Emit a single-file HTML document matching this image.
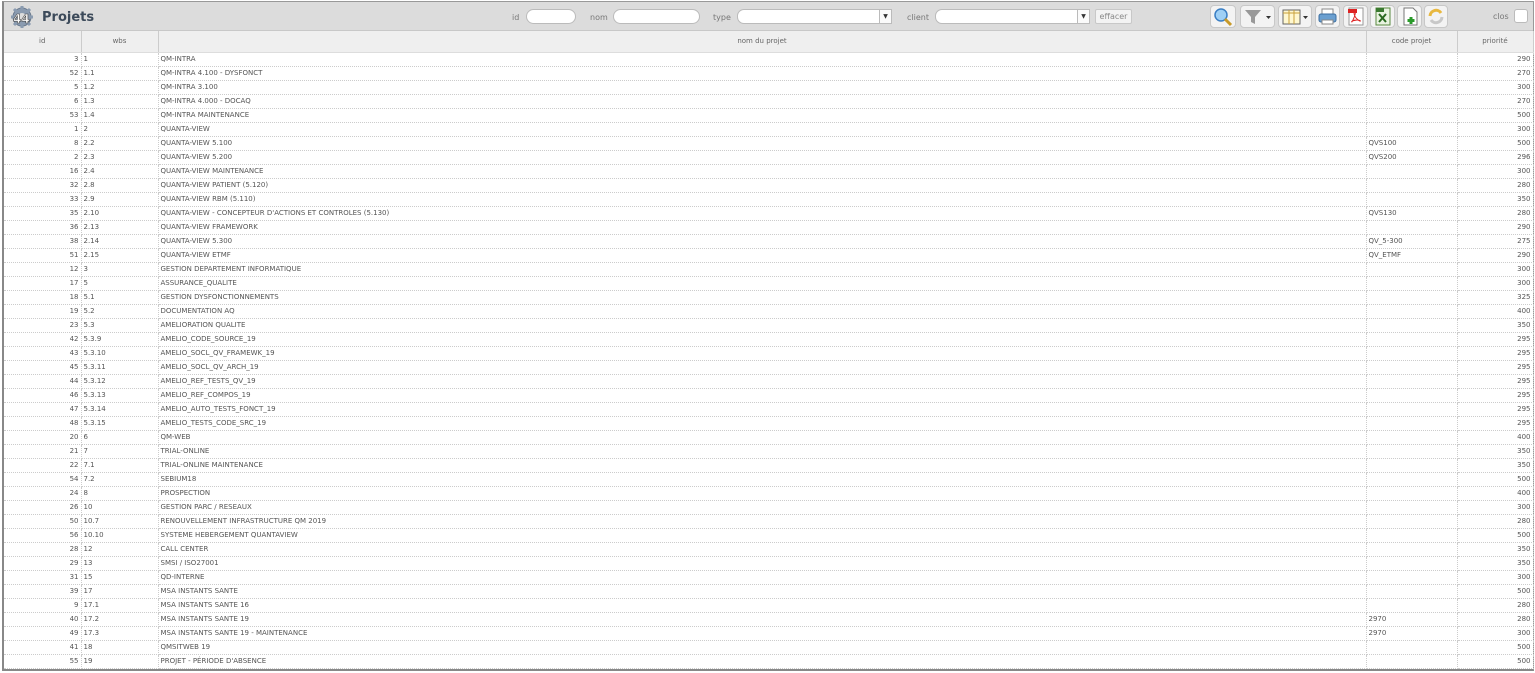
<!DOCTYPE html>
<html><head><meta charset="utf-8"><style>
*{box-sizing:border-box;margin:0;padding:0}
body{width:1535px;height:673px;background:#fff;font-family:"DejaVu Sans","Liberation Sans",sans-serif;font-size:7px;color:#555;position:relative;overflow:hidden}
.frame{position:absolute;left:2px;top:1px;width:1532px;height:670px;border:1px solid #999;border-left:2px solid #888;border-bottom:2px solid #888}
.bar{position:absolute;left:0;top:0;width:100%;height:29px;background:#dcdcdc;border-bottom:1px solid #c8c8c8}
.title{position:absolute;left:38px;top:8px;font-size:13px;font-weight:bold;color:#3c4a5a;font-family:"DejaVu Sans",sans-serif}
.lbl{position:absolute;top:11px;font-size:8px;color:#777}
.inp{position:absolute;top:7px;height:15px;background:#fff;border:1px solid #bbb;border-radius:8px}
.sel{position:absolute;top:7px;height:15px;background:#fff;border:1px solid #bbb;border-radius:7px 0 0 7px}
.dd{position:absolute;top:7px;width:13px;height:15px;background:#fafafa;border:1px solid #bbb;font-size:6px;text-align:center;line-height:13px;color:#333}
.btn{position:absolute;top:3px;height:23px;background:#f3f3f3;border:1px solid #c8c8c8;border-radius:4px}
table{position:absolute;left:0;top:29px;border-collapse:collapse;table-layout:fixed;width:1529px}
th{height:21px;background:#efefef;font-weight:normal;color:#666;border-right:1px solid #ccc;border-bottom:1px solid #ddd;font-size:7px}
td{height:14px;border-bottom:1px dotted #ccc;border-right:1px dotted #ccc;padding:0 2px;white-space:nowrap;overflow:hidden;line-height:13px}
td.r{text-align:right}
</style></head><body>
<div class="frame">
<div class="bar">
<svg style="position:absolute;left:5px;top:4px" width="26" height="22" viewBox="0 0 26 22"><circle cx="13" cy="11" r="9" fill="#8a9bb0" stroke="#6a7a8e"/><circle cx="13" cy="11" r="4" fill="#dcdcdc"/><g stroke="#8a9bb0" stroke-width="3"><path d="M13 0v4M13 18v4M2 11h4M20 11h4M5 3l3 3M18 16l3 3M21 3l-3 3M5 19l3-3"/></g><text x="4" y="17" font-size="12" font-weight="bold" fill="#fff" stroke="#444" stroke-width=".6" font-family="DejaVu Sans">44</text></svg>
<div class="title">Projets</div>
<div class="lbl" style="left:508px">id</div><div class="inp" style="left:522px;width:50px"></div>
<div class="lbl" style="left:586px">nom</div><div class="inp" style="left:609px;width:87px"></div>
<div class="lbl" style="left:709px">type</div><div class="sel" style="left:733px;width:143px"></div><div class="dd" style="left:875px">▼</div>
<div class="lbl" style="left:903px">client</div><div class="sel" style="left:931px;width:143px"></div><div class="dd" style="left:1073px">▼</div>
<div class="btn" style="left:1091px;top:7px;height:15px;width:37px;font-size:8px;color:#888;text-align:center;line-height:13px;border-radius:2px">effacer</div>
<div class="btn" style="left:1206px;width:26px"><svg width="24" height="21"><circle cx="10" cy="9" r="6" fill="#9fd0f5" stroke="#3b7fc4" stroke-width="1.5"/><path d="M14 13l6 6" stroke="#c89a2a" stroke-width="3"/></svg></div>
<div class="btn" style="left:1236px;width:35px"><svg width="33" height="21"><path d="M4 4h16l-6 7v7l-4-2v-5z" fill="#999"/><path d="M25 10h5l-2.5 3z" fill="#333"/></svg></div>
<div class="btn" style="left:1274px;width:34px"><svg width="32" height="21"><rect x="4" y="4" width="17" height="14" fill="#fff8d0" stroke="#666"/><path d="M4 7h17M10 4v14M15 4v14" stroke="#c9a13a"/><path d="M24 10h5l-2.5 3z" fill="#333"/></svg></div>
<div class="btn" style="left:1311px;width:25px"><svg width="23" height="21"><rect x="6" y="3" width="11" height="6" fill="#fff" stroke="#888"/><rect x="3" y="8" width="17" height="8" rx="2" fill="#6a9fd0" stroke="#3b6ea0"/><rect x="6" y="14" width="11" height="4" fill="#fff" stroke="#888"/></svg></div>
<div class="btn" style="left:1339px;width:25px"><svg width="23" height="21"><rect x="5" y="2" width="14" height="17" fill="#fff" stroke="#999"/><rect x="4" y="3" width="9" height="4" fill="#d22"/><path d="M8 16c3-6 4-9 3-10s-2 3 2 7 5 1 0 1-6 2-5 2" fill="none" stroke="#d22"/></svg></div>
<div class="btn" style="left:1366px;width:25px"><svg width="23" height="21"><rect x="5" y="2" width="14" height="17" fill="#e8f3e0" stroke="#5a8a40"/><rect x="5" y="2" width="8" height="4" fill="#3a7a30"/><path d="M8 8l7 8M15 8l-7 8" stroke="#2a6a20" stroke-width="2"/></svg></div>
<div class="btn" style="left:1393px;width:25px"><svg width="23" height="21"><path d="M6 2h9l4 4v13H6z" fill="#fff" stroke="#777"/><path d="M13 11v7M9.5 14.5h7" stroke="#2a9a2a" stroke-width="3"/></svg></div>
<div class="btn" style="left:1420px;width:24px"><svg width="22" height="21"><path d="M5 10a6 6 0 0 1 11-3" fill="none" stroke="#e8b840" stroke-width="3"/><path d="M17 11a6 6 0 0 1-11 3" fill="none" stroke="#c8c8c8" stroke-width="3"/></svg></div>
<div class="lbl" style="left:1489px;top:10px;font-size:8px">clos</div>
<div style="position:absolute;left:1510px;top:7px;width:14px;height:14px;background:#fff;border:1px solid #bbb;border-radius:3px"></div>
</div>
<table>
<colgroup><col style="width:77px"><col style="width:77px"><col style="width:1208px"><col style="width:91px"><col style="width:76px"></colgroup>
<tr><th>id</th><th>wbs</th><th>nom du projet</th><th>code projet</th><th>priorité</th></tr>
<tr><td class="r">3</td><td>1</td><td>QM-INTRA</td><td></td><td class="r">290</td></tr>
<tr><td class="r">52</td><td>1.1</td><td>QM-INTRA 4.100 - DYSFONCT</td><td></td><td class="r">270</td></tr>
<tr><td class="r">5</td><td>1.2</td><td>QM-INTRA 3.100</td><td></td><td class="r">300</td></tr>
<tr><td class="r">6</td><td>1.3</td><td>QM-INTRA 4.000 - DOCAQ</td><td></td><td class="r">270</td></tr>
<tr><td class="r">53</td><td>1.4</td><td>QM-INTRA MAINTENANCE</td><td></td><td class="r">500</td></tr>
<tr><td class="r">1</td><td>2</td><td>QUANTA-VIEW</td><td></td><td class="r">300</td></tr>
<tr><td class="r">8</td><td>2.2</td><td>QUANTA-VIEW 5.100</td><td>QVS100</td><td class="r">500</td></tr>
<tr><td class="r">2</td><td>2.3</td><td>QUANTA-VIEW 5.200</td><td>QVS200</td><td class="r">296</td></tr>
<tr><td class="r">16</td><td>2.4</td><td>QUANTA-VIEW MAINTENANCE</td><td></td><td class="r">300</td></tr>
<tr><td class="r">32</td><td>2.8</td><td>QUANTA-VIEW PATIENT (5.120)</td><td></td><td class="r">280</td></tr>
<tr><td class="r">33</td><td>2.9</td><td>QUANTA-VIEW RBM (5.110)</td><td></td><td class="r">350</td></tr>
<tr><td class="r">35</td><td>2.10</td><td>QUANTA-VIEW - CONCEPTEUR D'ACTIONS ET CONTROLES (5.130)</td><td>QVS130</td><td class="r">280</td></tr>
<tr><td class="r">36</td><td>2.13</td><td>QUANTA-VIEW FRAMEWORK</td><td></td><td class="r">290</td></tr>
<tr><td class="r">38</td><td>2.14</td><td>QUANTA-VIEW 5.300</td><td>QV_5-300</td><td class="r">275</td></tr>
<tr><td class="r">51</td><td>2.15</td><td>QUANTA-VIEW ETMF</td><td>QV_ETMF</td><td class="r">290</td></tr>
<tr><td class="r">12</td><td>3</td><td>GESTION DEPARTEMENT INFORMATIQUE</td><td></td><td class="r">300</td></tr>
<tr><td class="r">17</td><td>5</td><td>ASSURANCE_QUALITE</td><td></td><td class="r">300</td></tr>
<tr><td class="r">18</td><td>5.1</td><td>GESTION DYSFONCTIONNEMENTS</td><td></td><td class="r">325</td></tr>
<tr><td class="r">19</td><td>5.2</td><td>DOCUMENTATION AQ</td><td></td><td class="r">400</td></tr>
<tr><td class="r">23</td><td>5.3</td><td>AMELIORATION QUALITE</td><td></td><td class="r">350</td></tr>
<tr><td class="r">42</td><td>5.3.9</td><td>AMELIO_CODE_SOURCE_19</td><td></td><td class="r">295</td></tr>
<tr><td class="r">43</td><td>5.3.10</td><td>AMELIO_SOCL_QV_FRAMEWK_19</td><td></td><td class="r">295</td></tr>
<tr><td class="r">45</td><td>5.3.11</td><td>AMELIO_SOCL_QV_ARCH_19</td><td></td><td class="r">295</td></tr>
<tr><td class="r">44</td><td>5.3.12</td><td>AMELIO_REF_TESTS_QV_19</td><td></td><td class="r">295</td></tr>
<tr><td class="r">46</td><td>5.3.13</td><td>AMELIO_REF_COMPOS_19</td><td></td><td class="r">295</td></tr>
<tr><td class="r">47</td><td>5.3.14</td><td>AMELIO_AUTO_TESTS_FONCT_19</td><td></td><td class="r">295</td></tr>
<tr><td class="r">48</td><td>5.3.15</td><td>AMELIO_TESTS_CODE_SRC_19</td><td></td><td class="r">295</td></tr>
<tr><td class="r">20</td><td>6</td><td>QM-WEB</td><td></td><td class="r">400</td></tr>
<tr><td class="r">21</td><td>7</td><td>TRIAL-ONLINE</td><td></td><td class="r">350</td></tr>
<tr><td class="r">22</td><td>7.1</td><td>TRIAL-ONLINE MAINTENANCE</td><td></td><td class="r">350</td></tr>
<tr><td class="r">54</td><td>7.2</td><td>SEBIUM18</td><td></td><td class="r">500</td></tr>
<tr><td class="r">24</td><td>8</td><td>PROSPECTION</td><td></td><td class="r">400</td></tr>
<tr><td class="r">26</td><td>10</td><td>GESTION PARC / RESEAUX</td><td></td><td class="r">300</td></tr>
<tr><td class="r">50</td><td>10.7</td><td>RENOUVELLEMENT INFRASTRUCTURE QM 2019</td><td></td><td class="r">280</td></tr>
<tr><td class="r">56</td><td>10.10</td><td>SYSTEME HEBERGEMENT QUANTAVIEW</td><td></td><td class="r">500</td></tr>
<tr><td class="r">28</td><td>12</td><td>CALL CENTER</td><td></td><td class="r">350</td></tr>
<tr><td class="r">29</td><td>13</td><td>SMSI / ISO27001</td><td></td><td class="r">350</td></tr>
<tr><td class="r">31</td><td>15</td><td>QD-INTERNE</td><td></td><td class="r">300</td></tr>
<tr><td class="r">39</td><td>17</td><td>MSA INSTANTS SANTE</td><td></td><td class="r">500</td></tr>
<tr><td class="r">9</td><td>17.1</td><td>MSA INSTANTS SANTE 16</td><td></td><td class="r">280</td></tr>
<tr><td class="r">40</td><td>17.2</td><td>MSA INSTANTS SANTE 19</td><td>2970</td><td class="r">280</td></tr>
<tr><td class="r">49</td><td>17.3</td><td>MSA INSTANTS SANTE 19 - MAINTENANCE</td><td>2970</td><td class="r">300</td></tr>
<tr><td class="r">41</td><td>18</td><td>QMSITWEB 19</td><td></td><td class="r">500</td></tr>
<tr><td class="r">55</td><td>19</td><td>PROJET - PÉRIODE D'ABSENCE</td><td></td><td class="r">500</td></tr>
</table>
</div>
</body></html>
